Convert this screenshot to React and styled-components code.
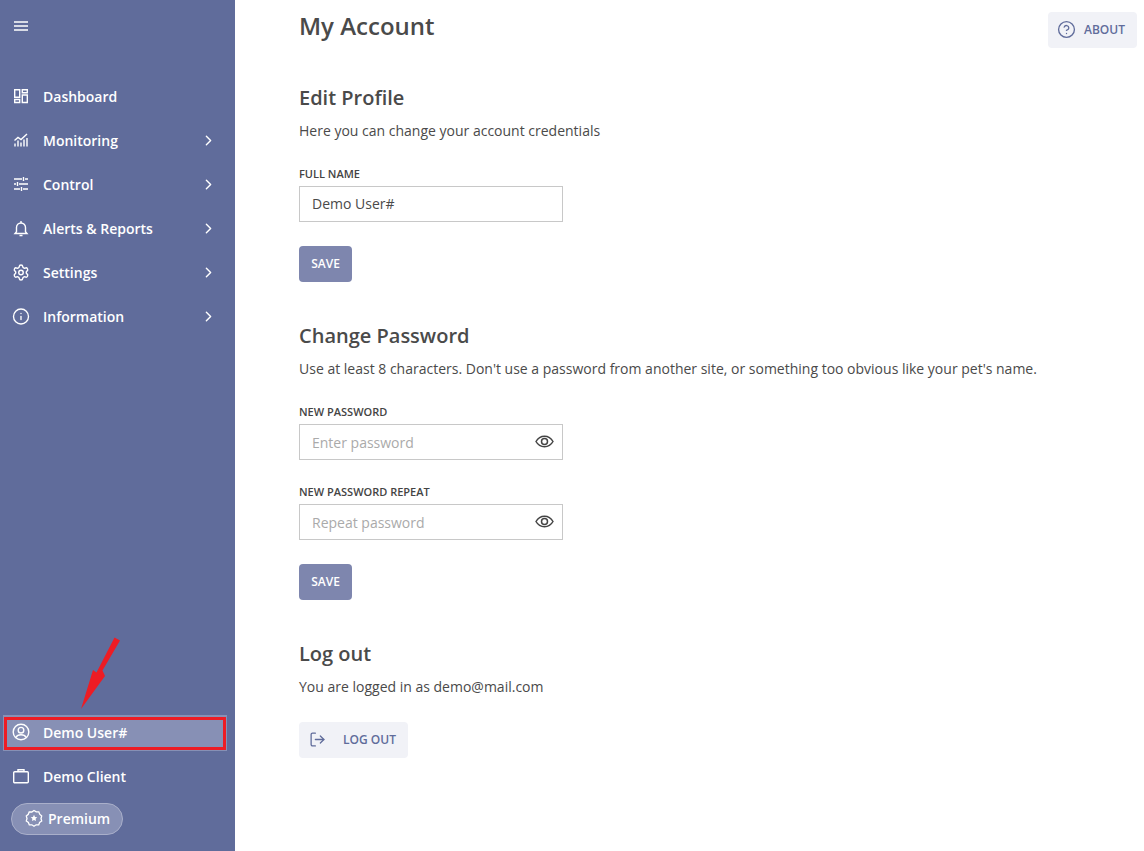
import React from 'react';
import styled, { createGlobalStyle } from 'styled-components';
import { ChevronRight, LogOut, CircleHelp, Settings, Info } from 'lucide-react';

const GlobalStyle = createGlobalStyle`
  html, body {
    margin: 0;
    padding: 0;
    height: 100%;
    background: #fff;
    font-family: "Open Sans", "Noto Sans", sans-serif;
    color: #4a4a4a;
  }
  * { box-sizing: border-box; }
`;

const Page = styled.div`
  display: flex;
  width: 1144px;
  height: 851px;
  position: relative;
  overflow: hidden;
`;

const Sidebar = styled.aside`
  width: 235px;
  height: 851px;
  flex-shrink: 0;
  background: #606c9b;
  display: flex;
  flex-direction: column;
  position: relative;
`;

const Burger = styled.div`
  height: 75px;
  padding: 21px 0 0 14px;
  display: flex;
  align-items: flex-start;
  color: #fff;
`;

const NavList = styled.nav`
  display: flex;
  flex-direction: column;
`;

const NavItem = styled.div`
  height: 44px;
  padding: 0 18px 2px 12px;
  display: flex;
  align-items: center;
  color: #fff;
  font-size: 14px;
  font-weight: 600;
`;

const ActiveItem = styled(NavItem)`
  height: 36px;
  margin: 4px 8px 4px 3px;
  padding-left: 9px;
  background: #8790b5;
`;

const NavIcon = styled.span`
  width: 18px;
  height: 18px;
  margin-right: 13px;
  display: flex;
  align-items: center;
  justify-content: center;
`;

const NavLabel = styled.span`
  flex: 1;
`;

const SidebarBottom = styled.div`
  margin-top: auto;
  padding-bottom: 16px;
  display: flex;
  flex-direction: column;
`;

const PremiumPill = styled.div`
  margin: 4px 0 0 11px;
  width: 112px;
  height: 32px;
  border-radius: 16px;
  border: 1px solid #a9afca;
  background: #8790b5;
  color: #fff;
  font-size: 14px;
  font-weight: 600;
  display: flex;
  align-items: center;
  gap: 5px;
  padding: 0 0 2px 13px;
`;

const Highlight = styled.div`
  position: absolute;
  left: 4px;
  top: 717px;
  width: 222px;
  height: 33px;
  border: 3px solid #ed1c24;
  pointer-events: none;
`;

const ArrowMark = styled.svg`
  position: absolute;
  left: 76px;
  top: 634px;
`;

const Main = styled.main`
  flex: 1;
  padding: 9px 0 0 64px;
`;

const Title = styled.h1`
  margin: 0 0 42px;
  font-size: 24px;
  line-height: 33px;
  font-weight: 600;
  color: #4a4a4a;
`;

const Section = styled.section`
  margin-bottom: ${({ $gap }) => $gap}px;
`;

const Heading = styled.h2`
  margin: 0 0 10px;
  font-size: 20px;
  line-height: 27px;
  font-weight: 600;
  color: #4a4a4a;
`;

const Note = styled.p`
  margin: 0 0 26px;
  font-size: 14px;
  line-height: 19px;
  color: #4a4a4a;
`;

const Field = styled.div`
  margin-bottom: 24px;
`;

const Label = styled.label`
  display: block;
  font-size: 11px;
  line-height: 15px;
  font-weight: 600;
  color: #444;
  margin-bottom: 5px;
`;

const InputBox = styled.div`
  width: 264px;
  height: 36px;
  border: 1px solid #c8c8c8;
  padding: 0 8px ${({ $placeholder }) => ($placeholder ? 0 : 2)}px 12px;
  display: flex;
  align-items: center;
  justify-content: space-between;
  font-size: 14px;
  color: ${({ $placeholder }) => ($placeholder ? '#aaa' : '#4a4a4a')};
`;

const SaveButton = styled.button`
  width: 53px;
  height: 36px;
  border: none;
  border-radius: 4px;
  background: #7e86ae;
  color: #fff;
  font-family: inherit;
  font-size: 12px;
  font-weight: 600;
  padding: 0 0 2px;
`;

const GhostButton = styled.button`
  height: 36px;
  border: none;
  border-radius: 4px;
  background: #f1f2f7;
  color: #606c9b;
  font-family: inherit;
  font-size: 12px;
  font-weight: 600;
  display: flex;
  align-items: center;
  padding: 0 0 2px;
`;

const LogoutButton = styled(GhostButton)`
  width: 109px;
  padding-left: 10px;
  gap: 17px;
`;

const AboutButton = styled(GhostButton)`
  position: absolute;
  left: 1048px;
  top: 12px;
  width: 89px;
  padding-left: 9px;
  gap: 8px;
`;

const EyeSvg = styled.svg`
  margin-bottom: 2px;
`;

const BurgerIcon = () => (
  <svg width="14" height="10" viewBox="0 0 14 10" fill="none" stroke="#fff" strokeWidth="1.4">
    <path d="M0 1h14M0 5h14M0 9h14" />
  </svg>
);

const DashboardIcon = () => (
  <svg width="16" height="16" viewBox="0 0 16 16" fill="none" stroke="#fff" strokeWidth="1.4">
    <path d="M1.700 1.700h5v7.500h-5zM1.700 11.500h5v3h-5zM9.300 1.700h5v3h-5zM9.300 7h5v7.500h-5z" />
  </svg>
);

const MonitoringIcon = () => (
  <svg width="16" height="16" viewBox="0 0 16 16" fill="none" stroke="#fff" strokeWidth="1.4">
    <path d="M1.500 8.500l3.500-3 3 2 6-5.500" />
    <path d="M2 14.500v-3M5 14.500V8.500M8 14.500v-4M11 14.500V7.500M14 14.500V6" />
  </svg>
);

const ControlIcon = () => (
  <svg width="16" height="16" viewBox="0 0 16 16" fill="none" stroke="#fff" strokeWidth="1.4">
    <path d="M1 3h8M12 3h3M10.500 1v4M1 8h2M6 8h9M4.500 6v4M1 13h6M10 13h5M8.500 11v4" />
  </svg>
);

const BellIcon = () => (
  <svg width="16" height="17" viewBox="0 0 16 17" fill="none" stroke="#fff" strokeWidth="1.4">
    <path d="M2 13.500h12l-1.500-1.800V7.500a4.500 4.500 0 0 0-9 0v4.200z" />
    <path d="M8 1v2M6.500 15.500h3" />
  </svg>
);

const EyeIcon = () => (
  <EyeSvg width="19" height="19" viewBox="0 0 19 19" fill="none" stroke="#444" strokeWidth="1.5">
    <path d="M1 9.500C3 6 6 4.300 9.500 4.300S16 6 18 9.500c-2 3.500-5 5.200-8.500 5.200S3 13 1 9.500z" />
    <circle cx="9.500" cy="9.500" r="3" />
  </EyeSvg>
);

const UserIcon = () => (
  <svg width="18" height="18" viewBox="0 0 18 18" fill="none" stroke="#fff" strokeWidth="1.4">
    <circle cx="9" cy="9" r="7.800" />
    <circle cx="9" cy="7.200" r="2.800" />
    <path d="M3.800 14.500c1-2 3-2.800 5.200-2.800s4.200.8 5.200 2.800" />
  </svg>
);

const CaseIcon = () => (
  <svg width="18" height="18" viewBox="0 0 18 18" fill="none" stroke="#fff" strokeWidth="1.4">
    <rect x="1.700" y="4.700" width="14.600" height="11" rx="1" />
    <path d="M6 4.700V2.700h6v2" />
  </svg>
);

const PremiumIcon = () => (
  <svg width="18" height="18" viewBox="0 0 18 18" fill="none" stroke="#fff" strokeWidth="1.300">
    <path d="M9 1.500l2.200 1.400 2.600-.1.900 2.400 2 1.700L16 9.500l.7 2.500-2.100 1.500-.9 2.400-2.600-.1L9 17.200l-2.100-1.400-2.600.1-.9-2.400-2.100-1.500.7-2.500-.7-2.500 2-1.700.9-2.400 2.600.1z" />
    <path fill="#fff" stroke="none" d="M9 5.800l1 2.100 2.300.3-1.700 1.600.4 2.300L9 11l-2 1.100.4-2.300-1.700-1.600L8 7.900z" />
  </svg>
);

const menu = [
  { label: 'Dashboard', icon: <DashboardIcon /> },
  { label: 'Monitoring', icon: <MonitoringIcon />, more: true },
  { label: 'Control', icon: <ControlIcon />, more: true },
  { label: 'Alerts & Reports', icon: <BellIcon />, more: true },
  { label: 'Settings', icon: <Settings size={19} strokeWidth={1.9} />, more: true },
  { label: 'Information', icon: <Info size={19} strokeWidth={1.8} />, more: true },
];

export default function App() {
  return (
    <Page>
      <GlobalStyle />
      <Sidebar>
        <Burger><BurgerIcon /></Burger>
        <NavList>
          {menu.map((item) => (
            <NavItem key={item.label}>
              <NavIcon>{item.icon}</NavIcon>
              <NavLabel>{item.label}</NavLabel>
              {item.more && <ChevronRight size={17} strokeWidth={2} />}
            </NavItem>
          ))}
        </NavList>
        <SidebarBottom>
          <ActiveItem>
            <NavIcon><UserIcon /></NavIcon>
            <NavLabel>Demo User#</NavLabel>
          </ActiveItem>
          <NavItem>
            <NavIcon><CaseIcon /></NavIcon>
            <NavLabel>Demo Client</NavLabel>
          </NavItem>
          <PremiumPill><PremiumIcon />Premium</PremiumPill>
        </SidebarBottom>
        <ArrowMark width="50" height="76" viewBox="0 0 50 76">
          <path fill="#ed1c24" d="M38.500 3.500L44 6.500 26.500 36.500 29 42 5 75 17 36 20.500 38.500z" />
        </ArrowMark>
        <Highlight />
      </Sidebar>
      <Main>
        <Title>My Account</Title>
        <Section $gap={40}>
          <Heading>Edit Profile</Heading>
          <Note>Here you can change your account credentials</Note>
          <Field>
            <Label>FULL NAME</Label>
            <InputBox>Demo User#</InputBox>
          </Field>
          <SaveButton>SAVE</SaveButton>
        </Section>
        <Section $gap={40}>
          <Heading>Change Password</Heading>
          <Note>Use at least 8 characters. Don't use a password from another site, or something too obvious like your pet's name.</Note>
          <Field>
            <Label>NEW PASSWORD</Label>
            <InputBox $placeholder>Enter password<EyeIcon /></InputBox>
          </Field>
          <Field>
            <Label>NEW PASSWORD REPEAT</Label>
            <InputBox $placeholder>Repeat password<EyeIcon /></InputBox>
          </Field>
          <SaveButton>SAVE</SaveButton>
        </Section>
        <Section $gap={0}>
          <Heading>Log out</Heading>
          <Note>You are logged in as demo@mail.com</Note>
          <LogoutButton><LogOut size={17} strokeWidth={1.8} />LOG OUT</LogoutButton>
        </Section>
      </Main>
      <AboutButton><CircleHelp size={19} strokeWidth={1.7} />ABOUT</AboutButton>
    </Page>
  );
}
